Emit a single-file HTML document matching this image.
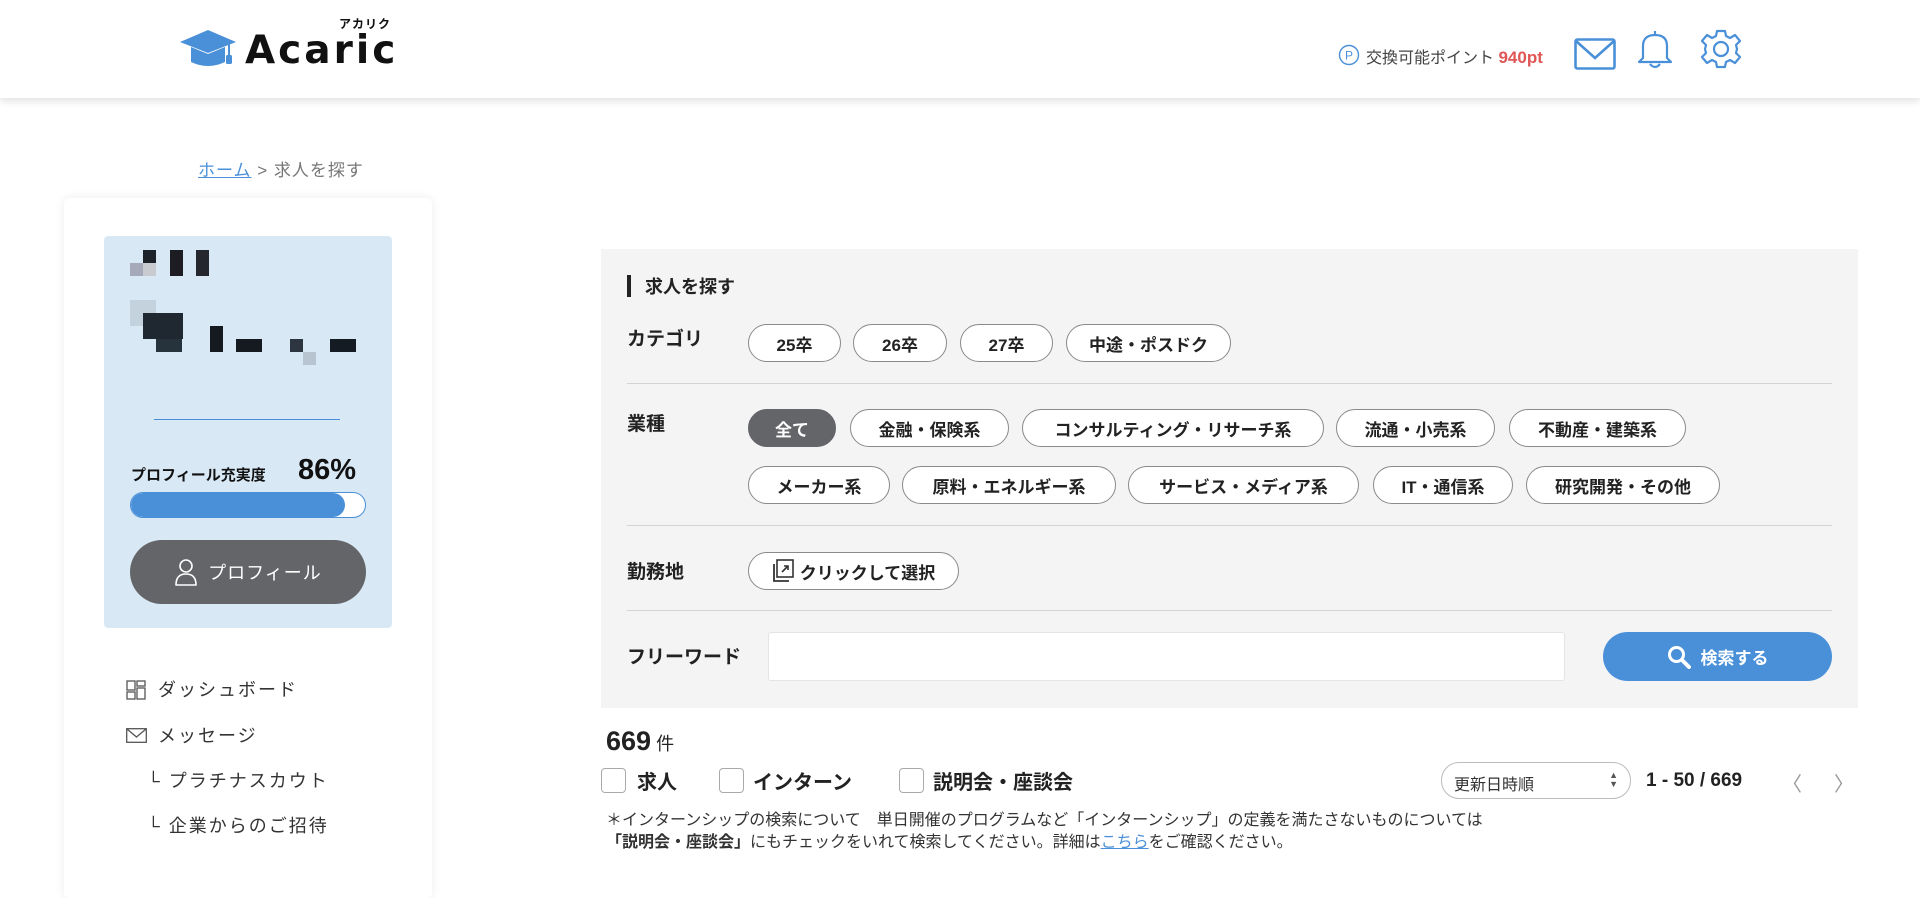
<!DOCTYPE html>
<html><head><meta charset="utf-8"><style>
*{box-sizing:border-box;margin:0;padding:0}
body{width:1920px;height:863px;overflow:hidden;background:#fff;font-family:"Liberation Sans","Noto Sans CJK JP",sans-serif;color:#333;position:relative}
.abs{position:absolute}
header{position:absolute;left:0;top:0;width:1920px;height:98px;background:#fff;box-shadow:0 3px 8px rgba(0,0,0,.12);z-index:2}
.pill{position:absolute;height:38px;border:1px solid #8a8a8a;border-radius:19px;background:#fff;font-size:17px;font-weight:bold;display:flex;align-items:center;justify-content:center;color:#222}
.lbl{position:absolute;left:627px;font-size:19px;font-weight:bold;color:#222}
.div{position:absolute;left:627px;width:1205px;height:1px;background:#d4d4d4}
.cb{position:absolute;top:768px;width:25px;height:25px;border:1px solid #aaa;border-radius:4px;background:#fff}
.cbt{position:absolute;top:766px;font-size:20px;font-weight:bold;color:#222}
.menu{position:absolute;font-size:18px;letter-spacing:2px;color:#333}
</style></head><body>
<header>
<svg class="abs" style="left:178px;top:28px" width="62" height="42" viewBox="0 0 62 42"><path d="M2 14 L30 2 L58 14 L30 25 Z" fill="#4a90d9"/><path d="M13 19 V34 Q30 42 47 34 V19 L30 26 Z" fill="#4a90d9"/><rect x="50" y="15" width="2" height="13" fill="#4a90d9"/><rect x="48" y="27" width="6" height="9" rx="1.5" fill="#4a90d9"/></svg>
<div class="abs" style="left:245px;top:29px;font-size:39px;font-weight:bold;color:#111;letter-spacing:3px;font-family:'DejaVu Sans','Liberation Sans',sans-serif;line-height:44px">Acaric</div>
<div class="abs" style="left:339px;top:17px;font-size:12px;font-weight:bold;color:#111;letter-spacing:1px;line-height:14px">アカリク</div>
<svg class="abs" style="left:1338px;top:44px" width="22" height="22" viewBox="0 0 22 22"><circle cx="11" cy="11" r="9.5" fill="none" stroke="#4a90d9" stroke-width="1.4"/><text x="11" y="15.5" text-anchor="middle" font-size="12" fill="#4a90d9" font-family="Liberation Sans">P</text></svg>
<div class="abs" style="left:1366px;top:44px;font-size:16px;color:#444">交換可能ポイント <span style="color:#e05555;font-weight:bold;font-size:17px">940pt</span></div>
<svg class="abs" style="left:1574px;top:38px" width="42" height="32" viewBox="0 0 42 32"><rect x="1.5" y="1.5" width="39" height="29" rx="2" fill="none" stroke="#4a90d9" stroke-width="2.6"/><path d="M2 3 L21 20 L40 3" fill="none" stroke="#4a90d9" stroke-width="2.6"/></svg>
<svg class="abs" style="left:1636px;top:28px" width="38" height="42" viewBox="0 0 38 42"><path d="M19 3 V6 M7 30 V18 Q7 7 19 7 Q31 7 31 18 V30 L35 34 H3 Z M14 36 Q19 42 24 36" fill="none" stroke="#4a90d9" stroke-width="2.2" stroke-linejoin="round"/></svg>
<svg class="abs" style="left:1700px;top:28px" width="42" height="42" viewBox="0 0 42 42"><path d="M17 3 H25 L26 8 L30 10 L35 7 L40 13 L36 17 L37 21 L36 25 L40 29 L35 35 L30 32 L26 34 L25 39 H17 L16 34 L12 32 L7 35 L2 29 L6 25 L5 21 L6 17 L2 13 L7 7 L12 10 L16 8 Z" fill="none" stroke="#4a90d9" stroke-width="2.2" stroke-linejoin="round"/><circle cx="21" cy="21" r="7" fill="none" stroke="#4a90d9" stroke-width="2.2"/></svg>
</header>
<div class="abs" style="left:198px;top:156px;font-size:17px;color:#777;letter-spacing:1px"><span style="color:#4a90d9;text-decoration:underline">ホーム</span> &gt; 求人を探す</div>

<div class="abs" style="left:64px;top:198px;width:368px;height:700px;background:#fff;box-shadow:0 0 10px rgba(0,0,0,.08);border-radius:6px"></div>
<div class="abs" style="left:104px;top:236px;width:288px;height:392px;background:#d9e8f5;border-radius:4px"></div>
<div class="abs" style="left:130px;top:263px;width:13px;height:13px;background:#99a;opacity:.8"></div>
<div class="abs" style="left:143px;top:263px;width:13px;height:13px;background:#c8ccd0"></div>
<div class="abs" style="left:143px;top:250px;width:13px;height:13px;background:#1c2229"></div>
<div class="abs" style="left:170px;top:250px;width:13px;height:26px;background:#1c1c22"></div>
<div class="abs" style="left:196px;top:250px;width:13px;height:26px;background:#24272e"></div>
<div class="abs" style="left:130px;top:300px;width:26px;height:26px;background:#c4d2de"></div>
<div class="abs" style="left:143px;top:313px;width:40px;height:26px;background:#1f2730"></div>
<div class="abs" style="left:156px;top:339px;width:26px;height:13px;background:#26323c"></div>
<div class="abs" style="left:210px;top:326px;width:13px;height:26px;background:#141a20"></div>
<div class="abs" style="left:236px;top:339px;width:26px;height:13px;background:#141a20"></div>
<div class="abs" style="left:290px;top:339px;width:13px;height:13px;background:#2c3540"></div>
<div class="abs" style="left:303px;top:352px;width:13px;height:13px;background:#b8c4cf"></div>
<div class="abs" style="left:330px;top:339px;width:26px;height:13px;background:#151b22"></div>
<div class="abs" style="left:154px;top:419px;width:186px;height:1px;background:#4a90d9"></div>
<div class="abs" style="left:131px;top:464px;font-size:15px;font-weight:bold;color:#111">プロフィール充実度</div>
<div class="abs" style="left:298px;top:454px;font-size:29px;font-weight:bold;color:#111">86%</div>
<div class="abs" style="left:130px;top:492px;width:236px;height:26px;border:1.5px solid #4a90d9;border-radius:13px;background:#fff;overflow:hidden"><div style="width:214px;height:100%;background:#4a90d9;border-radius:13px"></div></div>
<div class="abs" style="left:130px;top:540px;width:236px;height:64px;background:#646568;border-radius:32px;color:#fff;font-size:18px;letter-spacing:1px;display:flex;align-items:center;justify-content:center;gap:10px"><svg width="24" height="28" viewBox="0 0 24 28"><circle cx="12" cy="8" r="6" fill="none" stroke="#fff" stroke-width="1.6"/><path d="M2 27 Q2 16 12 16 Q22 16 22 27 Z" fill="none" stroke="#fff" stroke-width="1.6" stroke-linejoin="round"/></svg>プロフィール</div>
<svg class="abs" style="left:126px;top:680px" width="20" height="20" viewBox="0 0 20 20"><g fill="none" stroke="#555" stroke-width="1.3"><rect x="1" y="1" width="8" height="9"/><rect x="11" y="1" width="8" height="5"/><rect x="1" y="12" width="8" height="7"/><rect x="11" y="8" width="8" height="11"/></g></svg>
<div class="menu" style="left:158px;top:676px">ダッシュボード</div>
<svg class="abs" style="left:126px;top:728px" width="21" height="15" viewBox="0 0 21 15"><rect x=".7" y=".7" width="19.6" height="13.6" fill="none" stroke="#555" stroke-width="1.3"/><path d="M1 1 L10.5 9 L20 1" fill="none" stroke="#555" stroke-width="1.3"/></svg>
<div class="menu" style="left:158px;top:722px">メッセージ</div>
<div class="menu" style="left:147px;top:767px">└ プラチナスカウト</div>
<div class="menu" style="left:147px;top:812px">└ 企業からのご招待</div>

<div class="abs" style="left:601px;top:249px;width:1257px;height:459px;background:#f4f4f4"></div>
<div class="abs" style="left:627px;top:275px;width:4px;height:22px;background:#222"></div>
<div class="abs" style="left:645px;top:273px;font-size:18px;font-weight:bold;color:#222">求人を探す</div>
<div class="lbl" style="top:324px">カテゴリ</div>
<div class="pill" style="left:748px;top:324px;width:93px">25卒</div>
<div class="pill" style="left:853px;top:324px;width:94px">26卒</div>
<div class="pill" style="left:960px;top:324px;width:93px">27卒</div>
<div class="pill" style="left:1066px;top:324px;width:165px">中途・ポスドク</div>
<div class="div" style="top:383px"></div>
<div class="lbl" style="top:409px">業種</div>
<div class="pill" style="left:748px;top:409px;width:88px;background:#646568;border-color:#646568;color:#fff">全て</div>
<div class="pill" style="left:850px;top:409px;width:159px">金融・保険系</div>
<div class="pill" style="left:1022px;top:409px;width:302px">コンサルティング・リサーチ系</div>
<div class="pill" style="left:1336px;top:409px;width:159px">流通・小売系</div>
<div class="pill" style="left:1509px;top:409px;width:177px">不動産・建築系</div>
<div class="pill" style="left:748px;top:466px;width:142px">メーカー系</div>
<div class="pill" style="left:902px;top:466px;width:214px">原料・エネルギー系</div>
<div class="pill" style="left:1128px;top:466px;width:231px">サービス・メディア系</div>
<div class="pill" style="left:1373px;top:466px;width:140px">IT・通信系</div>
<div class="pill" style="left:1526px;top:466px;width:194px">研究開発・その他</div>
<div class="div" style="top:525px"></div>
<div class="lbl" style="top:557px">勤務地</div>
<div class="pill" style="left:748px;top:552px;width:211px;gap:6px"><svg width="22" height="24" viewBox="0 0 22 24"><rect x="5" y="1" width="16" height="17" fill="none" stroke="#333" stroke-width="1.6"/><path d="M2 5 V22 H17" fill="none" stroke="#333" stroke-width="1.8"/><path d="M10 13 L16 7 M12 7 H16 V11" fill="none" stroke="#333" stroke-width="1.6"/></svg>クリックして選択</div>
<div class="div" style="top:610px"></div>
<div class="lbl" style="top:642px">フリーワード</div>
<div class="abs" style="left:768px;top:632px;width:797px;height:49px;background:#fff;border:1px solid #e4e4e4;border-radius:3px"></div>
<div class="abs" style="left:1603px;top:632px;width:229px;height:49px;background:#4a90d9;border-radius:25px;color:#fff;font-size:17px;font-weight:bold;display:flex;align-items:center;justify-content:center;gap:10px"><svg width="24" height="24" viewBox="0 0 24 24"><circle cx="9.5" cy="9.5" r="7" fill="none" stroke="#fff" stroke-width="3"/><path d="M15 15 L22 22" stroke="#fff" stroke-width="4" stroke-linecap="round"/></svg>検索する</div>

<div class="abs" style="left:606px;top:726px;font-size:27px;font-weight:bold;color:#222">669<span style="font-size:18px;font-weight:normal"> 件</span></div>
<div class="cb" style="left:601px"></div><div class="cbt" style="left:637px">求人</div>
<div class="cb" style="left:719px"></div><div class="cbt" style="left:753px">インターン</div>
<div class="cb" style="left:899px"></div><div class="cbt" style="left:933px">説明会・座談会</div>
<div class="abs" style="left:1441px;top:762px;width:190px;height:37px;border:1px solid #bbb;border-radius:18px;background:#fff;font-size:16px;padding:8px 12px;color:#333">更新日時順<span style="position:absolute;right:12px;top:8px;font-size:9px;line-height:9px;color:#555">▲<br>▼</span></div>
<div class="abs" style="left:1646px;top:770px;font-size:19px;font-weight:bold;color:#222">1 - 50 / 669</div>
<div class="abs" style="left:1782px;top:768px;font-size:20px;color:#999">〈</div>
<div class="abs" style="left:1834px;top:768px;font-size:20px;color:#999">〉</div>
<div class="abs" style="left:606px;top:810px;font-size:16px;color:#333;line-height:22px">＊インターンシップの検索について　単日開催のプログラムなど「インターンシップ」の定義を満たさないものについては<br><b>「説明会・座談会」</b>にもチェックをいれて検索してください。詳細は<span style="color:#4a90d9;text-decoration:underline">こちら</span>をご確認ください。</div>
</body></html>
